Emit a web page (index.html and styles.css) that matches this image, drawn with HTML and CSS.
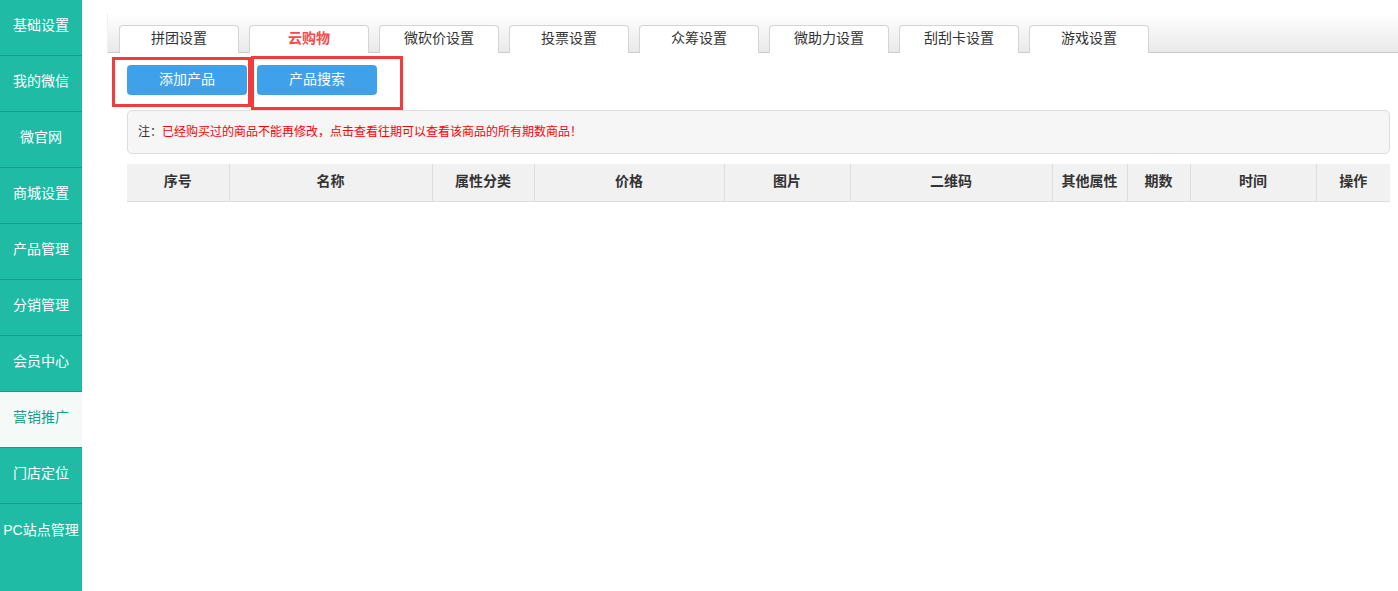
FILE: index.html
```html
<!DOCTYPE html>
<html lang="zh-CN">
<head>
    <meta charset="UTF-8">
    <meta name="viewport" content="width=device-width, initial-scale=1.0">
    <title>云购物</title>
    <link rel="stylesheet" href="styles.css">
</head>
<body>
    <div id="wrap">
        <div class="side">
            <a class="menu">基础设置</a>
            <a class="menu">我的微信</a>
            <a class="menu">微官网</a>
            <a class="menu">商城设置</a>
            <a class="menu">产品管理</a>
            <a class="menu">分销管理</a>
            <a class="menu">会员中心</a>
            <a class="menu on">营销推广</a>
            <a class="menu">门店定位</a>
            <a class="menu">PC站点管理</a>
        </div>
        <div class="main">
            <div class="tabs">
                <span class="tab">拼团设置</span>
                <span class="tab on">云购物</span>
                <span class="tab">微砍价设置</span>
                <span class="tab">投票设置</span>
                <span class="tab">众筹设置</span>
                <span class="tab">微助力设置</span>
                <span class="tab">刮刮卡设置</span>
                <span class="tab">游戏设置</span>
            </div>
            <div class="tools">
                <span class="btn">添加产品</span>
                <span class="btn">产品搜索</span>
                <!-- 标注框 -->
                <i class="mark mark1"></i>
                <i class="mark mark2"></i>
            </div>
            <div class="tip">注：<span>已经购买过的商品不能再修改，点击查看往期可以查看该商品的所有期数商品！</span></div>
            <table class="list">
                <colgroup>
                    <col style="width:102px">
                    <col style="width:203px">
                    <col style="width:102px">
                    <col style="width:190px">
                    <col style="width:126px">
                    <col style="width:202px">
                    <col style="width:75px">
                    <col style="width:63px">
                    <col style="width:126px">
                    <col style="width:74px">
                </colgroup>
                <thead>
                    <tr>
                        <th>序号</th>
                        <th>名称</th>
                        <th>属性分类</th>
                        <th>价格</th>
                        <th>图片</th>
                        <th>二维码</th>
                        <th>其他属性</th>
                        <th>期数</th>
                        <th>时间</th>
                        <th>操作</th>
                    </tr>
                </thead>
            </table>
        </div>
    </div>
</body>
</html>
```

FILE: styles.css
```css
* {
    box-sizing: border-box;
}
body {
    margin: 0;
    font-family: "Liberation Sans", "Noto Sans CJK SC", sans-serif;
    font-size: 14px;
    color: #333;
    background: #fff;
}
#wrap {
    display: flex;
    min-height: 591px;
}
.side {
    width: 82px;
    flex-shrink: 0;
    background: #20bba5;
    display: flex;
    flex-direction: column;
}
.menu {
    display: flex;
    align-items: center;
    justify-content: center;
    height: 56px;
    border-bottom: 1px solid #179e8b;
    color: #fff;
    font-size: 14px;
    white-space: nowrap;
    padding-bottom: 7px;
}
.menu:last-child {
    border-bottom: none;
}
.menu.on {
    background: #f5f9f8;
    color: #14a08c;
}
.main {
    flex: 1;
    padding-top: 13px;
    padding-left: 25px;
}
.tabs {
    height: 40px;
    display: flex;
    align-items: flex-end;
    gap: 10px;
    padding-left: 11px;
    border-left: 1px solid #f0f0f0;
    border-bottom: 1px solid #ccc;
    background: linear-gradient(#fff, #e9e9e9);
}
.tab {
    width: 120px;
    height: 28px;
    margin-bottom: -1px;
    padding-bottom: 5px;
    display: flex;
    align-items: center;
    justify-content: center;
    background: #fff;
    border: 1px solid #d4d4d4;
    border-bottom: none;
    border-radius: 4px 4px 0 0;
    color: #333;
}
.tab.on {
    color: #f44a4a;
    font-weight: bold;
}
.tools {
    position: relative;
    display: flex;
    gap: 10px;
    margin: 12px 8px 0 20px;
}
.btn {
    width: 120px;
    height: 30px;
    padding-bottom: 4px;
    display: flex;
    align-items: center;
    justify-content: center;
    background: #3fa1ea;
    color: #fff;
    border-radius: 4px;
}
.mark {
    position: absolute;
    border: 3px solid #f33b3b;
}
.mark1 {
    left: -15px;
    top: -8px;
    width: 139px;
    height: 50px;
}
.mark2 {
    left: 124px;
    top: -9px;
    width: 152px;
    height: 54px;
}
.tip {
    margin: 15px 8px 0 20px;
    height: 44px;
    padding: 0 10px 4px;
    display: flex;
    align-items: center;
    background: #f6f6f6;
    border: 1px solid #ddd;
    border-radius: 5px;
    font-size: 12px;
    color: #333;
}
.tip span {
    color: #f00;
}
.list {
    margin: 10px 8px 0 20px;
    width: 1263px;
    border-collapse: collapse;
    table-layout: fixed;
}
.list th {
    height: 37px;
    background: #f1f1f1;
    border-left: 1px solid #ddd;
    border-bottom: 1px solid #ddd;
    font-size: 14px;
    font-weight: bold;
    color: #333;
    text-align: center;
    padding: 0 0 4px;
}
.list th:first-child {
    border-left: none;
}
```
